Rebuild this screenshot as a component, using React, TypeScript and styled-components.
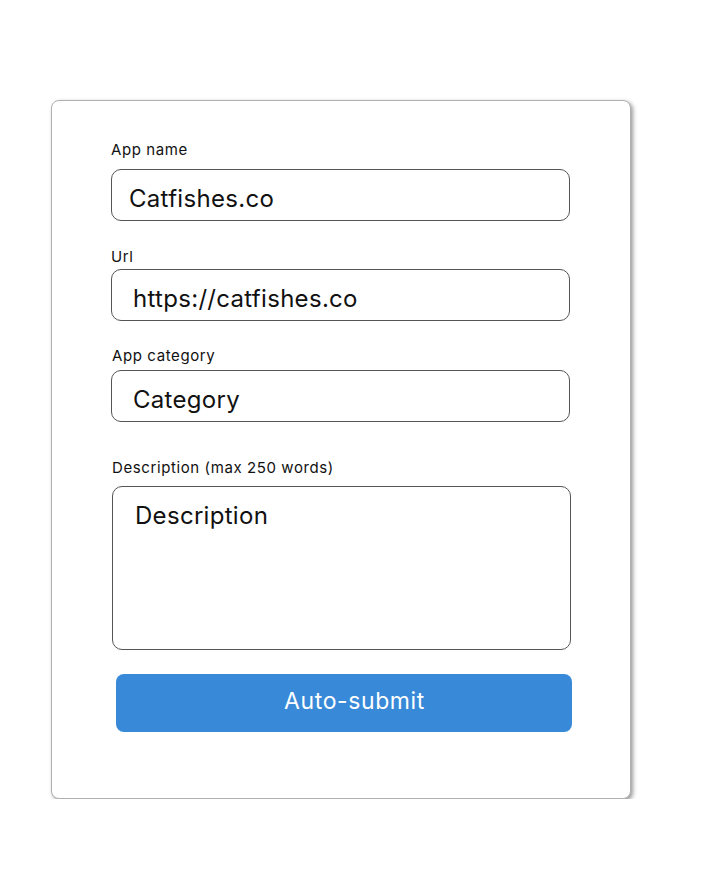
import React from "react";
import styled, { createGlobalStyle } from "styled-components";

const Global = createGlobalStyle`
  html, body { margin: 0; padding: 0; background: #ffffff; }
  body { font-family: Inter, "Noto Sans", sans-serif; color: #111; }
`;

const Card = styled.form`
  box-sizing: border-box;
  width: 580px;
  height: 699px;
  margin: 100px 0 0 51px;
  padding: 40px 0 0 59px;
  border: 1px solid #b0b0b0;
  border-radius: 8px;
  background: #fff;
  box-shadow: 2px 2px 4px rgba(0, 0, 0, 0.4);
  display: flex;
  flex-direction: column;
  align-items: flex-start;
`;

const Label = styled.label<{ $top: number; $gap: number; $left?: number }>`
  display: block;
  margin: ${(p) => p.$top}px 0 ${(p) => p.$gap}px ${(p) => p.$left ?? 0}px;
  font-family: Inter, sans-serif;
  font-size: 15px;
  line-height: 18px;
  letter-spacing: 0.6px;
  color: #111;
`;

const TextInput = styled.input<{ $padLeft: number; $left?: number }>`
  box-sizing: border-box;
  width: 459px;
  height: 52px;
  margin: 0 0 0 ${(p) => p.$left ?? 0}px;
  padding: 14px 12px 7px ${(p) => p.$padLeft}px;
  border: 1px solid #555;
  border-radius: 10px;
  background: #fff;
  font-family: Inter, sans-serif;
  font-size: 24px;
  line-height: 29px;
  letter-spacing: 0.3px;
  color: #111;
  outline: none;
  &::placeholder { color: #111; opacity: 1; }
`;

const TextArea = styled.textarea`
  box-sizing: border-box;
  width: 459px;
  height: 164px;
  margin: 0 0 0 1px;
  padding: 14px 12px 8px 22px;
  border: 1px solid #555;
  border-radius: 10px;
  background: #fff;
  font-family: Inter, sans-serif;
  font-size: 24px;
  line-height: 29px;
  letter-spacing: 0.3px;
  color: #111;
  resize: none;
  outline: none;
  &::placeholder { color: #111; opacity: 1; }
`;

const SubmitButton = styled.button`
  box-sizing: border-box;
  width: 456px;
  height: 58px;
  margin: 24px 0 0 5px;
  padding: 0 0 4px 21px;
  border: none;
  border-radius: 8px;
  background: #3889d8;
  color: #fff;
  font-family: Inter, sans-serif;
  font-size: 23px;
  line-height: 27px;
  letter-spacing: 0.6px;
  cursor: pointer;
`;

export default function App() {
  return (
    <>
      <Global />
      <Card onSubmit={(e) => e.preventDefault()}>
        <Label $top={0} $gap={10}>App name</Label>
        <TextInput $padLeft={17} defaultValue="Catfishes.co" />
        <Label $top={27} $gap={3}>Url</Label>
        <TextInput $padLeft={21} defaultValue="https://catfishes.co" />
        <Label $top={26} $gap={5} $left={1}>App category</Label>
        <TextInput $padLeft={21} placeholder="Category" />
        <Label $top={37} $gap={9} $left={1}>Description (max 250 words)</Label>
        <TextArea placeholder="Description" />
        <SubmitButton type="submit">Auto-submit</SubmitButton>
      </Card>
    </>
  );
}
